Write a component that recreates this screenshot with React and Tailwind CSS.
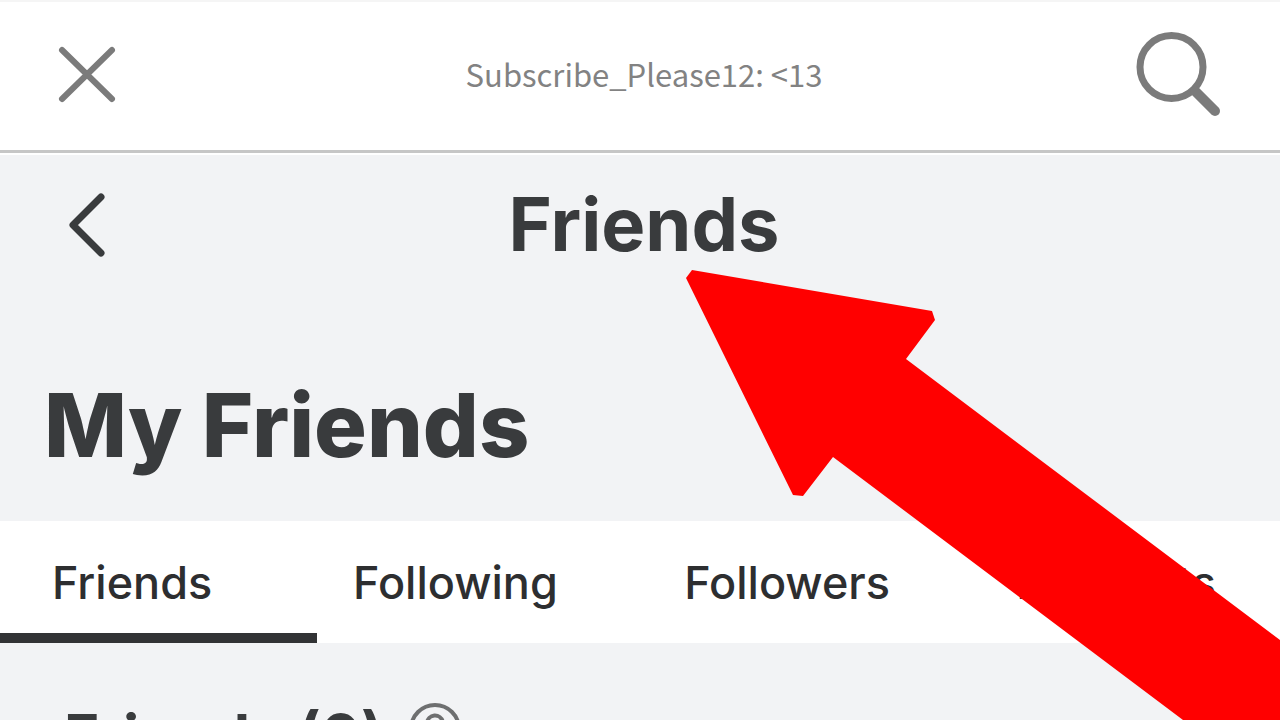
import { useState } from 'react';

const tabs = ['Friends', 'Following', 'Followers', 'Requests'];

function CloseIcon() {
    return (
        <svg width="62" height="62" viewBox="0 0 62 62" fill="none" stroke="#7b7b7b" strokeWidth="6" strokeLinecap="round" aria-hidden="true">
            <path d="M6 7 L56 56 M56 7 L6 56" />
        </svg>
    );
}

function SearchIcon() {
    return (
        <svg width="96" height="96" viewBox="0 0 96 96" fill="none" stroke="#7b7b7b" strokeLinecap="round" aria-hidden="true">
            <circle cx="35.5" cy="41" r="31.5" strokeWidth="7" />
            <path d="M59 65 L79 85" strokeWidth="10" />
        </svg>
    );
}

function BackIcon() {
    return (
        <svg width="62" height="72" viewBox="0 0 62 72" fill="none" stroke="#393b3d" strokeWidth="7" strokeLinecap="round" strokeLinejoin="round" aria-hidden="true">
            <path d="M45 9 L17 37 L45 65" />
        </svg>
    );
}

function HelpIcon() {
    return (
        <svg width="54" height="54" viewBox="0 0 54 54" fill="none" stroke="#6e6f70" strokeWidth="4" strokeLinecap="round" aria-hidden="true">
            <circle cx="27" cy="27" r="24" />
            <path d="M19 21 a8 8 0 1 1 11 8 q-3 2 -3 5 M27 41 v0.5" />
        </svg>
    );
}

function Tab({ name, active, onSelect, className }) {
    return (
        <button
            type="button"
            onClick={() => onSelect(name)}
            className={
                'border-b-10 pt-3 text-left ' +
                (active === name ? 'border-[#323335] ' : 'border-transparent ') +
                className
            }
        >
            {name}
        </button>
    );
}

export default function App() {
    const [active, setActive] = useState('Friends');

    return (
        <div className="relative h-screen overflow-hidden bg-[#f2f3f5] text-[#393b3d] font-['Inter',sans-serif]">
            <header className="grid grid-cols-[1fr_auto_1fr] items-center h-[153px] pl-14 pr-12 pb-1 bg-white border-t-2 border-t-[#f5f5f5] border-b-3 border-b-[#c6c6c6]">
                <button type="button" aria-label="Close" className="justify-self-start">
                    <CloseIcon />
                </button>
                <p className="text-[31px] leading-10 text-[#828282] font-['Noto_Sans_CJK_SC',sans-serif]">
                    Subscribe_Please12: &lt;13
                </p>
                <button type="button" aria-label="Search" className="justify-self-end">
                    <SearchIcon />
                </button>
            </header>

            <div className="grid grid-cols-[1fr_auto_1fr] items-center h-36 pl-14 pr-12 pb-1 border-t-2 border-white">
                <button type="button" aria-label="Back" className="justify-self-start">
                    <BackIcon />
                </button>
                <h2 className="text-[74px] leading-none font-bold">Friends</h2>
            </div>

            <h1 className="pt-[84px] pb-[52px] pl-11 text-[88px] leading-none font-extrabold">My Friends</h1>

            <nav className="flex h-[122px] bg-white text-[45px] font-medium text-[#2d2e30]">
                <Tab name={tabs[0]} active={active} onSelect={setActive} className="w-[317px] pl-[52px]" />
                <div className="flex flex-1 justify-between pl-9 pr-16">
                    {tabs.slice(1).map((tab) => (
                        <Tab key={tab} name={tab} active={active} onSelect={setActive} className="" />
                    ))}
                </div>
            </nav>

            <div className="flex items-start gap-6 pt-[59px] pl-16">
                <h3 className="text-[60px] leading-[68px] font-bold">Friends (0)</h3>
                <HelpIcon />
            </div>

            {/* red pointer lying over the page */}
            <svg className="absolute top-0 left-0 pointer-events-none" width="1280" height="720" viewBox="0 0 1280 720" aria-hidden="true">
                <path
                    fill="#ff0000"
                    d="M692 270 L932 311 L935 320 L906 359 L1280 640 V720 H1183 L833 457 L803 496 L793 495 L686 278 Z"
                />
            </svg>
        </div>
    );
}
